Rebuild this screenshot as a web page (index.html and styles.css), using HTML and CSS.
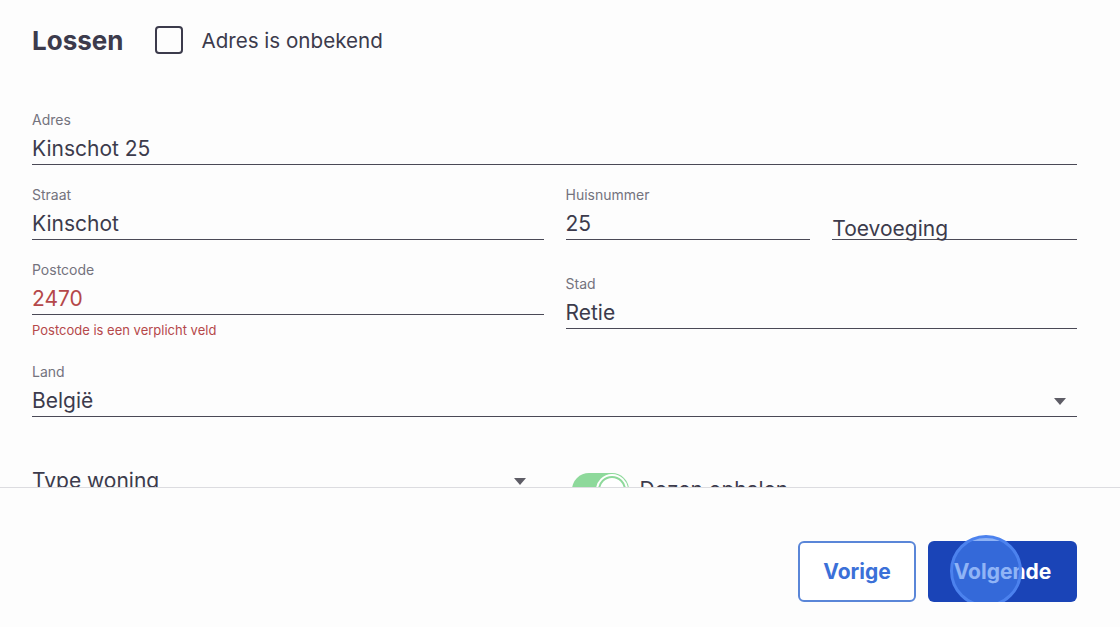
FILE: index.html
```html
<!DOCTYPE html>
<html lang="nl">
<head>
    <meta charset="UTF-8">
    <meta name="viewport" content="width=device-width, initial-scale=1.0">
    <title>Lossen</title>
    <link rel="stylesheet" href="styles.css">
</head>
<body>
    <div class="form-scroll">
        <div class="section-head">
            <h2>Lossen</h2>
            <label class="check">
                <span class="check-box"></span>
                Adres is onbekend
            </label>
        </div>

        <div class="field full">
            <span class="field-label">Adres</span>
            <div class="field-input">Kinschot 25</div>
        </div>

        <div class="row">
            <div class="field">
                <span class="field-label">Straat</span>
                <div class="field-input">Kinschot</div>
            </div>
            <div class="split">
                <div class="field">
                    <span class="field-label">Huisnummer</span>
                    <div class="field-input">25</div>
                </div>
                <div class="field">
                    <div class="field-input placeholder">Toevoeging</div>
                </div>
            </div>
        </div>

        <div class="row centered">
            <div class="field error">
                <span class="field-label">Postcode</span>
                <div class="field-input">2470</div>
                <span class="field-error">Postcode is een verplicht veld</span>
            </div>
            <div class="field">
                <span class="field-label">Stad</span>
                <div class="field-input">Retie</div>
            </div>
        </div>

        <div class="field full">
            <span class="field-label">Land</span>
            <div class="field-input select">België<span class="caret"></span></div>
        </div>

        <div class="row extra">
            <div class="field">
                <div class="field-input select bare">Type woning<span class="caret"></span></div>
            </div>
            <div class="toggle-line">
                <span class="toggle on"><span class="knob"></span></span>
                Dozen ophalen
            </div>
        </div>
    </div>

    <div class="actions">
        <button class="btn outline">Vorige</button>
        <button class="btn primary">Volgende<span class="click-dot"></span></button>
    </div>
</body>
</html>
```

FILE: styles.css
```css
body {
    margin: 0;
    background: #fdfdfd;
    font-family: "Inter", "Liberation Sans", sans-serif;
    color: #3c3b4c;
}
.form-scroll {
    height: 487px;
    overflow: hidden;
    padding: 0 43px 0 32px;
    border-bottom: 1px solid #dcdce0;
}
.section-head {
    display: flex;
    align-items: center;
    gap: 32px;
    height: 80px;
    margin-bottom: 31px;
}
.section-head h2 {
    margin: 0;
    font-size: 26px;
    font-weight: 700;
}
.check {
    display: flex;
    align-items: center;
    gap: 18px;
    font-size: 20.6px;
}
.check-box {
    width: 24px;
    height: 24px;
    border: 2px solid #3c3b4c;
    border-radius: 4px;
}
.row {
    display: grid;
    grid-template-columns: 1fr 1fr;
    column-gap: 22px;
    margin-top: 21px;
}
.row.centered {
    align-items: center;
}
.split {
    display: grid;
    grid-template-columns: 1fr 1fr;
    column-gap: 22px;
    align-items: end;
}
.field {
    display: flex;
    flex-direction: column;
}
.field.full {
    margin-top: 21px;
}
.field.full:first-of-type {
    margin-top: 0;
}
.field-label {
    font-size: 14px;
    line-height: 18px;
    color: #74737d;
}
.field-input {
    position: relative;
    font-size: 21px;
    line-height: 28px;
    padding: 6px 0 1px;
    border-bottom: 1px solid #4a4956;
}
.field-input.placeholder {
    padding: 0;
    line-height: 20px;
}
.field.error .field-input {
    color: #b5484a;
}
.field-error {
    margin-top: 7px;
    padding-bottom: 4px;
    font-size: 13px;
    line-height: 16px;
    color: #b5484a;
}
.select .caret {
    position: absolute;
    right: 11px;
    top: 17px;
    border-left: 6px solid transparent;
    border-right: 6px solid transparent;
    border-top: 7px solid #5e5d66;
}
.select.bare {
    border-bottom: none;
}
.row.extra {
    margin-top: 44px;
    align-items: start;
}
.row.extra .field {
    margin-right: 7px;
}
.toggle-line {
    display: flex;
    align-items: center;
    gap: 11px;
    margin-left: 6px;
    margin-top: 12px;
    font-size: 21px;
    line-height: 34px;
}
.toggle {
    position: relative;
    width: 57px;
    height: 34px;
    border-radius: 17px;
    background: #8ed99b;
}
.toggle .knob {
    position: absolute;
    right: 3px;
    top: 3px;
    width: 24px;
    height: 24px;
    border-radius: 50%;
    background: #fff;
    border: 2px solid #8ed99b;
    box-shadow: 0 0 0 2px #fff;
}
.actions {
    display: flex;
    justify-content: flex-end;
    gap: 12px;
    padding: 53px 43px 0 0;
}
.btn {
    position: relative;
    height: 61px;
    border-radius: 6px;
    font-family: inherit;
    font-size: 21px;
    font-weight: 700;
    cursor: pointer;
}
.btn.outline {
    width: 118px;
    background: #fff;
    color: #3b70d8;
    border: 2px solid #5a86d8;
}
.btn.primary {
    width: 149px;
    background: #1a44b7;
    color: #fff;
    border: none;
}
.click-dot {
    position: absolute;
    left: 22px;
    top: -6px;
    width: 66px;
    height: 66px;
    border-radius: 50%;
    background: rgba(70, 130, 240, 0.6);
    border: 3px solid #4c82ee;
}
```
